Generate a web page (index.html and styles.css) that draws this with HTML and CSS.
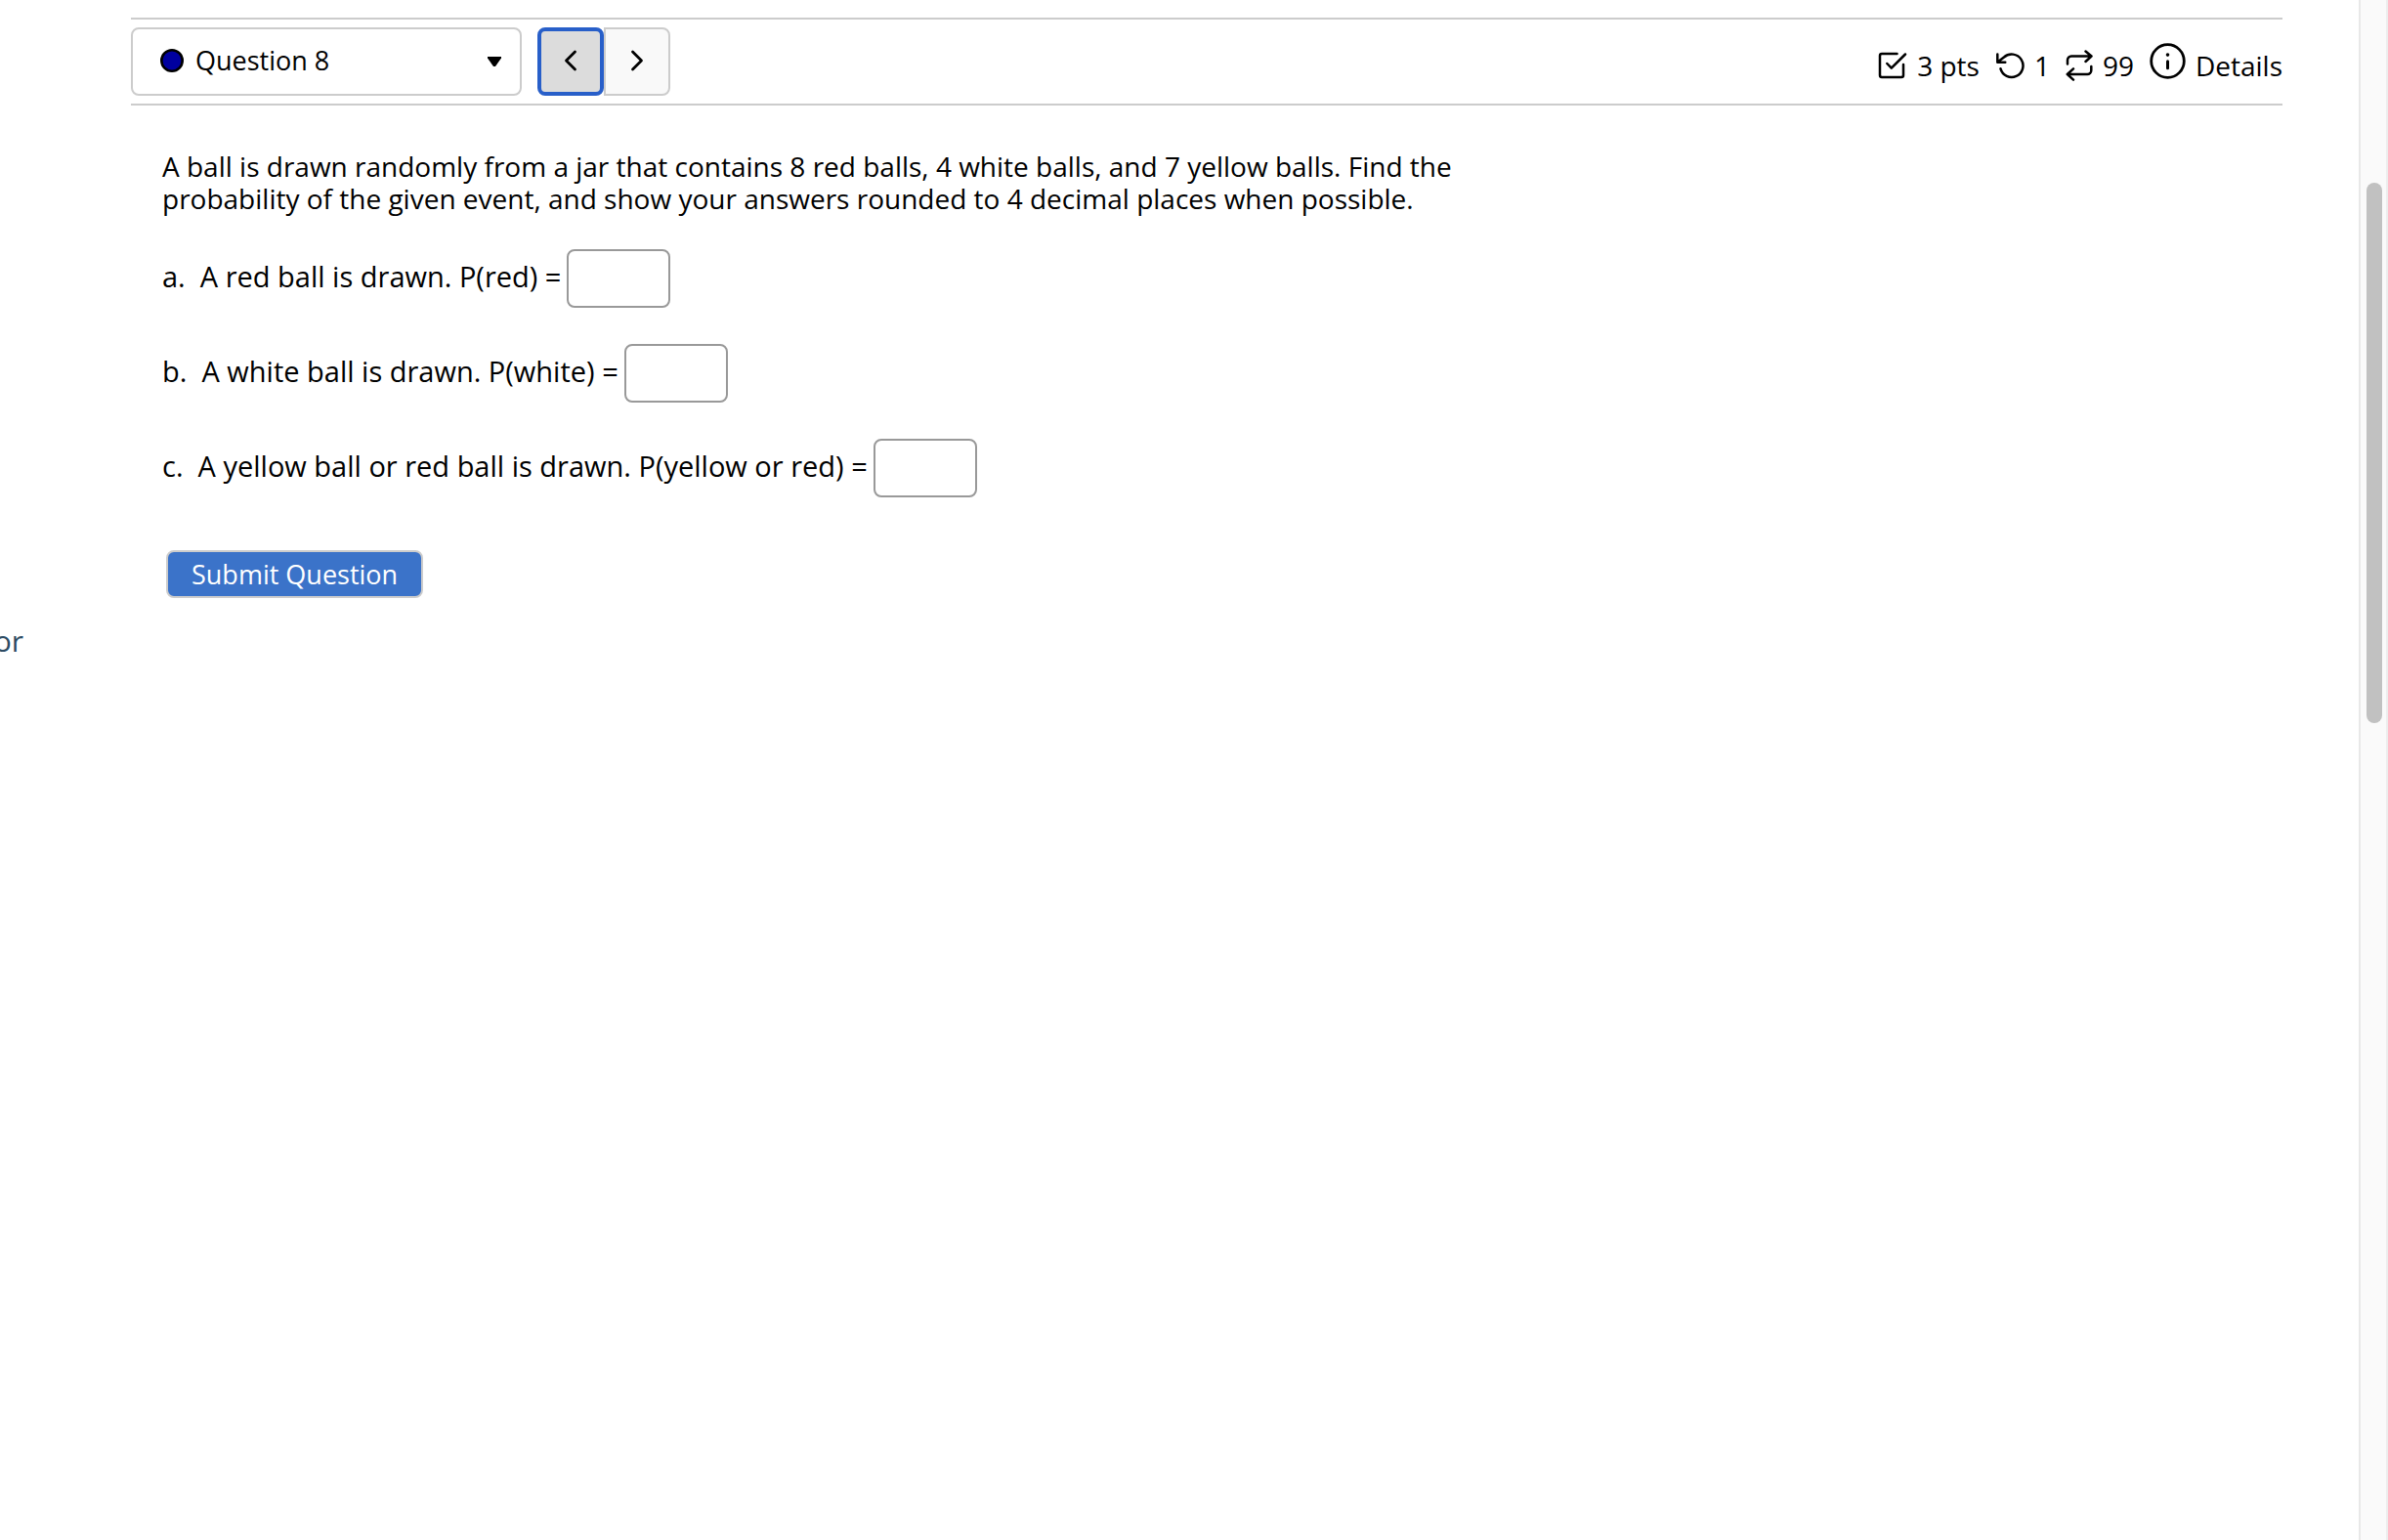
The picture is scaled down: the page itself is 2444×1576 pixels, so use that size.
FILE: index.html
```
<!DOCTYPE html>
<html lang="en">
<head>
<meta charset="utf-8">
<title>Question 8</title>
<link rel="stylesheet" href="styles.css">
</head>
<body>
<div class="page">
  <aside class="sidebar"><span class="sidebar-text">or</span></aside>
  <main class="main">
    <header class="toolbar">
      <div class="picker">
        <svg class="status" width="24" height="24" viewBox="0 0 24 24" aria-hidden="true"><circle cx="12" cy="12" r="10.7" fill="#00009f" stroke="#000" stroke-width="2.6"/></svg>
        <select class="picker-select" aria-label="Question">
          <option>Question 8</option>
        </select>
        <svg class="caret" width="14" height="10" viewBox="0 0 14 10" aria-hidden="true"><path d="M0 0h14v1.500L8 10H6L0 1.500z"/></svg>
      </div>
      <div class="pager">
        <button class="pager-button prev" type="button" aria-label="Previous question"><svg class="icon" width="14" height="22" viewBox="0 0 14 22" stroke-width="2.800" aria-hidden="true"><path d="M11.500 2L2.500 11l9 9"/></svg></button>
        <button class="pager-button next" type="button" aria-label="Next question"><svg class="icon" width="14" height="22" viewBox="0 0 14 22" stroke-width="2.800" aria-hidden="true"><path d="M2.500 2l9 9-9 9"/></svg></button>
      </div>
      <div class="meta">
        <span class="meta-item"><svg class="icon" width="30" height="28" viewBox="0 0 30 28" stroke-width="2.500" aria-hidden="true"><path d="M19.500 2H4a2 2 0 0 0-2 2v20a2 2 0 0 0 2 2h20a2 2 0 0 0 2-2V13M9.300 12l4.500 4.700L28 2.500"/></svg>3 pts</span>
        <span class="meta-item"><svg class="icon" width="30" height="28" viewBox="0 0 30 28" stroke-width="2.500" aria-hidden="true"><path d="M2.300 2.500v8.300h8M2.500 10.600L9 5.500A11.700 11.700 0 1 1 5.500 17.300"/></svg>1</span>
        <span class="meta-item"><svg class="icon" width="28" height="32" viewBox="0 0 28 32" stroke-width="2.500" aria-hidden="true"><path d="M2 14.500V10.500a4 4 0 0 1 4-4h20.500M20.500 1.500l6 5-6 5.500M26.300 17v4a4 4 0 0 1-4 4H1.800M8 19.300L1.800 25 8 30.600"/></svg>99</span>
        <button class="meta-item details" type="button"><svg class="icon info" width="37" height="37" viewBox="0 0 37 37" aria-hidden="true"><circle cx="18.500" cy="18.500" r="16.800" stroke-width="2.800"/><path d="M18.500 18.700v7" stroke-width="3"/><path d="M18.500 12v.1" stroke-width="3.600"/></svg>Details</button>
      </div>
    </header>
    <form class="question">
      <p class="prompt">A ball is drawn randomly from a jar that contains 8 red balls, 4 white balls, and 7 yellow balls. Find the<br>probability of the given event, and show your answers rounded to 4 decimal places when possible.</p>
      <div class="part">
        <label class="part-label" for="answer-a">a.&nbsp; A red ball is drawn. P(red) =</label>
        <input class="answer" id="answer-a" type="text">
      </div>
      <div class="part">
        <label class="part-label" for="answer-b">b.&nbsp; A white ball is drawn. P(white) =</label>
        <input class="answer" id="answer-b" type="text">
      </div>
      <div class="part">
        <label class="part-label" for="answer-c">c.&nbsp; A yellow ball or red ball is drawn. P(yellow or red) =</label>
        <input class="answer" id="answer-c" type="text">
      </div>
      <button class="submit" type="button">Submit Question</button>
    </form>
  </main>
  <div class="scrollbar"><div class="thumb"></div></div>
</div>
</body>
</html>
```
FILE: styles.css
```
* { box-sizing: border-box; }

body {
  margin: 0;
  background: #fff;
  color: #000;
  font-family: "Trebuchet MS", "Open Sans", sans-serif;
  font-size: 28px;
  line-height: 38px;
}

button, input, select { font: inherit; color: inherit; }

.page {
  display: grid;
  grid-template-columns: 24px 1fr 30px;
  min-height: 100vh;
}

/* Neighbouring panel, cut off at the window's left edge */
.sidebar {
  display: flex;
  justify-content: flex-end;
  overflow: hidden;
  padding-top: 637px;
  color: #2d4b63;
  font-family: "Open Sans", sans-serif;
  font-size: 30px;
}

.main { padding: 18px 78px 0 110px; }

.toolbar {
  display: flex;
  align-items: center;
  padding: 8px 0;
  border-top: 2px solid #ccc;
  border-bottom: 2px solid #ccc;
}

.picker {
  display: flex;
  align-items: center;
  width: 400px;
  height: 70px;
  padding: 0 19px 0 28px;
  border: 2px solid #ccc;
  border-radius: 8px;
}
.status { margin-bottom: 2px; }
.picker-select {
  flex: 1;
  height: 66px;
  margin-left: 12px;
  padding: 0 0 2px;
  border: 0;
  background: none;
  font-size: 27px;
  appearance: none;
  outline: 0;
}

.pager { display: flex; margin-left: 16px; }
.pager-button {
  display: flex;
  align-items: center;
  justify-content: center;
  width: 68px;
  height: 70px;
  padding: 0 0 2px;
  border: 2px solid #ccc;
  background: #f9f9f9;
}
.prev {
  border: 4px solid #285fc9;
  border-radius: 8px;
  background: #dcdcdc;
}
.next { border-radius: 0 8px 8px 0; }

.icon {
  flex: none;
  fill: none;
  stroke: currentColor;
  stroke-linecap: round;
  stroke-linejoin: round;
}

.meta {
  display: flex;
  align-items: center;
  gap: 16px;
  margin-left: auto;
  padding-top: 8px;
}
.meta-item {
  display: flex;
  align-items: center;
  gap: 10px;
  height: 38px;
}
.details { padding: 0; border: 0; background: none; }
.info { margin-bottom: 10px; }

.question { padding: 46px 32px 0; }

.prompt { margin: 0 0 35px; line-height: 33px; }

.part {
  display: flex;
  align-items: center;
  gap: 6px;
  margin-bottom: 37px;
}
.part-label { padding-bottom: 4px; font-size: 29px; }
.answer {
  width: 106px;
  height: 60px;
  padding: 0 8px;
  border: 2px solid #999;
  border-radius: 8px;
  background: #fff;
}

.submit {
  display: block;
  height: 49px;
  margin: 54px 0 0 4px;
  padding: 0 24px;
  border: 2px solid #ccc;
  border-radius: 8px;
  background: #3b73c9;
  color: #fff;
  font-size: 27px;
  line-height: 38px;
}

.scrollbar {
  padding: 187px 4px 0 6px;
  border-left: 2px solid #e8e8e8;
  border-right: 2px solid #ededed;
  background: #fafafa;
}
.thumb { width: 16px; height: 553px; border-radius: 8px; background: #c1c1c1; }
```
